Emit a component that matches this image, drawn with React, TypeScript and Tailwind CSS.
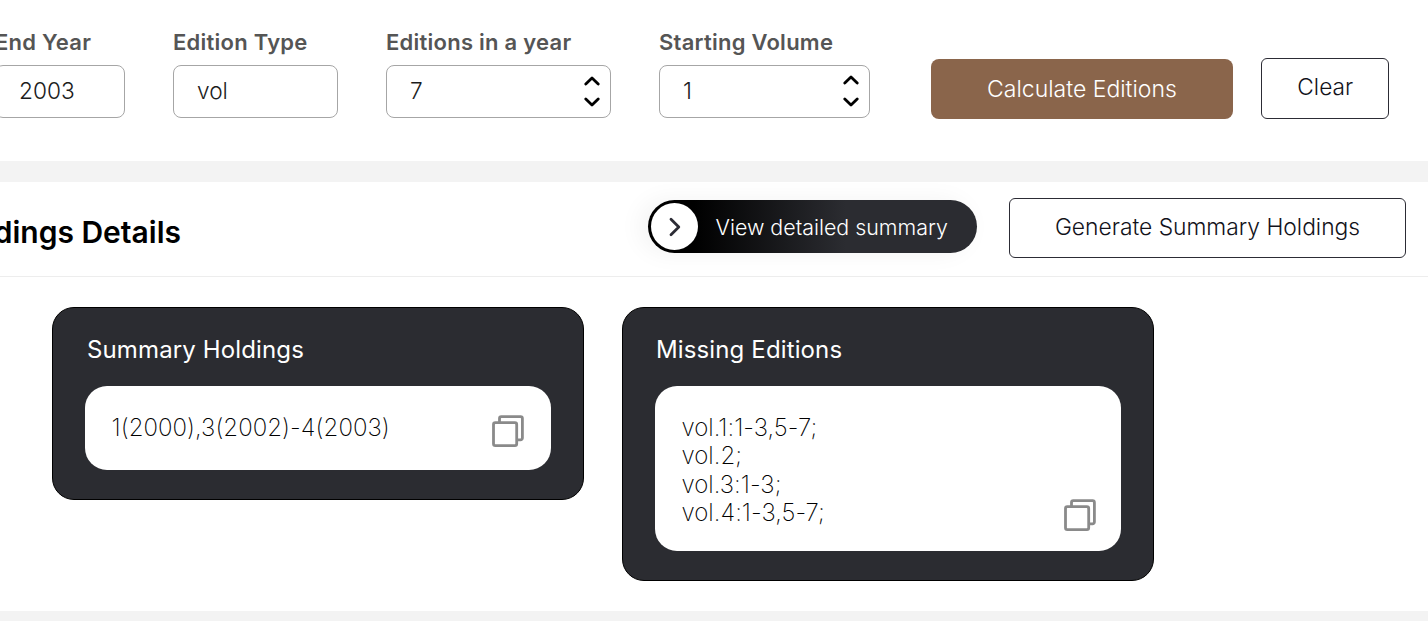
import React from "react";

type FieldProps = {
  label: string;
  value: string;
  className: string;
  spinner?: string;
};

function Spinner({ className }: { className: string }) {
  return (
    <div className={`flex flex-col items-center justify-between ${className}`}>
      <svg width="16" height="10" viewBox="0 0 16 10" fill="none" stroke="#000" strokeWidth="2.8" strokeLinecap="round" strokeLinejoin="round">
        <path d="M1.8 8 8 2 14.2 8" />
      </svg>
      <svg width="16" height="10" viewBox="0 0 16 10" fill="none" stroke="#000" strokeWidth="2.8" strokeLinecap="round" strokeLinejoin="round">
        <path d="M1.8 2 8 8 14.2 2" />
      </svg>
    </div>
  );
}

function Field({ label, value, className, spinner }: FieldProps) {
  return (
    <div className={`shrink-0 ${className}`}>
      <div className="h-[35px] whitespace-nowrap text-[22px] font-semibold leading-[24px] tracking-[0.25px] text-[#555]">
        {label}
      </div>
      <div className="flex h-[53px] items-center justify-between rounded-[8px] border border-[#a6a6a6] bg-white pl-[23px] text-[22.7px] font-light text-[#1c1c1c]">
        <span>{value}</span>
        {spinner && <Spinner className={spinner} />}
      </div>
    </div>
  );
}

function CopyIcon() {
  return (
    <svg width="32" height="32" viewBox="0 0 32 32" fill="none" stroke="#8a8a8a" strokeWidth="2.8" strokeLinejoin="round">
      <path d="M7.5 7V3.4a1.8 1.8 0 0 1 1.8-1.8H28.6a1.8 1.8 0 0 1 1.8 1.8V23a1.8 1.8 0 0 1-1.8 1.8H25" />
      <rect x="1.5" y="7.6" width="23.2" height="23" rx="1.8" />
    </svg>
  );
}

type CardProps = {
  title: string;
  titleClass: string;
  lines: string[];
  boxClass: string;
};

function Card({ title, titleClass, lines, boxClass }: CardProps) {
  return (
    <section className="w-[532px] shrink-0 rounded-[22px] border border-black bg-[#2b2c31] px-[32px] pb-[29px] pt-[27px]">
      <h3 className={`mb-[22px] text-[24px] font-normal leading-[29px] tracking-[0.13px] text-white ${titleClass}`}>{title}</h3>
      <div className={`flex items-end justify-between rounded-[22px] bg-white pl-[26.5px] ${boxClass}`}>
        <div className="self-start pt-[27.7px] text-[24px] font-extralight leading-[28.6px] tracking-[0.03px] text-black">
          {lines.map((line) => (
            <div key={line}>{line}</div>
          ))}
        </div>
        <CopyIcon />
      </div>
    </section>
  );
}

export default function App() {
  return (
    <div className="h-[621px] w-[1428px] overflow-hidden bg-[#f3f3f3] font-['Inter',sans-serif]">
      <div className="flex h-[161px] items-start bg-white pt-[30px]">
        <Field label="End Year" value="2003" className="-ml-[5px] w-[130px]" />
        <Field label="Edition Type" value="vol" className="ml-[48px] w-[165px]" />
        <Field label="Editions in a year" value="7" className="ml-[48px] w-[225px]" spinner="h-[31px] mr-[10px]" />
        <Field label="Starting Volume" value="1" className="ml-[48px] w-[211.4px]" spinner="h-[32px] mr-[10px] -mt-[1px]" />
        <button className="ml-[60.6px] mt-[29.4px] h-[60px] w-[302px] shrink-0 rounded-[8px] bg-[#8a654b] text-[23px] font-light text-white">
          Calculate Editions
        </button>
        <button className="ml-[28px] mt-[28px] h-[61px] w-[128.5px] shrink-0 rounded-[6px] border border-[#2c2c35] pb-[3px] text-[22.7px] font-light text-[#12121a]">
          Clear
        </button>
      </div>

      <div className="mt-[21px] h-[429px] bg-white">
        <header className="flex h-[95px] items-start border-b border-[#ededed] pt-[16px]">
          <div className="flex w-[181px] shrink-0 justify-end pt-[16px]">
            <h2 className="whitespace-nowrap text-[30px] font-semibold leading-[36px] text-black">Holdings Details</h2>
          </div>
          <button className="ml-[467px] mt-[2px] flex h-[53px] w-[329px] shrink-0 items-center rounded-full bg-linear-to-r/srgb from-black from-14% to-[#2b2c31] to-60% pl-[3px] shadow-[-8px_0_24px_rgba(0,0,0,0.05)]">
            <span className="flex h-[47px] w-[47px] shrink-0 items-center justify-center rounded-full bg-white">
              <svg width="12" height="20" viewBox="0 0 12 20" fill="none" stroke="#2c2c35" strokeWidth="2.8" strokeLinecap="round" strokeLinejoin="round">
                <path d="M2 2.2 9.8 10 2 17.8" />
              </svg>
            </span>
            <span className="ml-[17.5px] whitespace-nowrap pt-[2px] text-[21.4px] font-light text-white">View detailed summary</span>
          </button>
          <button className="ml-[32px] h-[60px] w-[397px] shrink-0 rounded-[6px] border border-[#2c2c35] pb-[1px] text-[22.8px] font-light text-[#12121a]">
            Generate Summary Holdings
          </button>
        </header>

        <main className="flex items-start gap-[38px] pl-[52px] pt-[30px]">
          <Card
            title="Summary Holdings"
            titleClass="pl-[2px]"
            lines={["1(2000),3(2002)-4(2003)"]}
            boxClass="h-[84px] pb-[23px] pr-[27px]"
          />
          <Card
            title="Missing Editions"
            titleClass="pl-[1px]"
            lines={["vol.1:1-3,5-7;", "vol.2;", "vol.3:1-3;", "vol.4:1-3,5-7;"]}
            boxClass="h-[165px] pb-[20px] pr-[25px]"
          />
        </main>
      </div>
    </div>
  );
}
